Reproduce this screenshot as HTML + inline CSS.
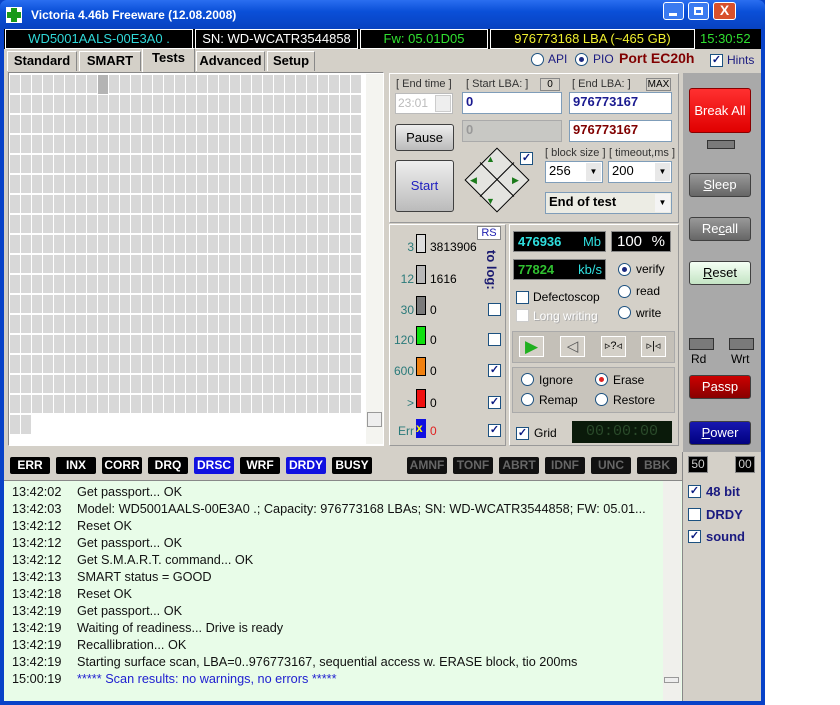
<!DOCTYPE html>
<html><head><meta charset="utf-8"><style>
*{box-sizing:border-box;margin:0;padding:0}
body{width:840px;height:705px;background:#fff;font-family:"Liberation Sans",sans-serif;font-size:12px;position:relative;overflow:hidden}
.a{position:absolute}
.win{left:0;top:0;width:765px;height:705px;background:#0842c8;}
.title{left:0;top:0;width:765px;height:29px;background:linear-gradient(#2a6ef0,#0a4fd8 40%,#0842c0);border-radius:7px 7px 0 0}
.body{left:4px;top:29px;width:757px;height:672px;background:#d4d0c8}
.inf{top:29px;height:20px;background:#000;border:1px solid #fff;font-size:13px;text-align:center;line-height:18px}
.tab{top:51px;height:20px;border:1px solid #fff;border-right-color:#888;border-bottom:none;font-weight:bold;font-size:13px;line-height:18px;text-align:center;background:#d4d0c8}
.btn{border:1px solid #404040;border-radius:3px;text-align:center;font-size:13px}
.inp{background:#fff;border:1px solid #7f9db9;font-weight:bold;font-size:13px;padding-left:3px;line-height:18px}
.lbl{font-size:11px;color:#333}
.cb{width:13px;height:13px;border:1px solid #1c5180;background:#fff;font-size:11px;line-height:11px;text-align:center;color:#0a1a80;font-weight:bold}
.rb{width:13px;height:13px;border:1px solid #1c5180;border-radius:50%;background:#fff}
.rb.on::after{content:"";position:absolute;left:3px;top:3px;width:5px;height:5px;border-radius:50%;background:#1c2a80}
.st{top:457px;height:17px;background:#000;color:#fff;font-weight:bold;font-size:12px;text-align:center;line-height:17px;border-radius:2px}
.st2{top:457px;height:17px;background:#111;color:#666;font-weight:bold;font-size:12px;text-align:center;line-height:17px;border-radius:2px}
.log div{height:17px;line-height:17px;white-space:nowrap}
.log span{display:inline-block;width:65px}
.bar{width:10px;height:19px;border:1px solid #000}
.num{font-size:12px;color:#2a7a7a;text-align:right;width:28px}
</style></head><body>
<div class="a win"></div>
<div class="a title"></div>
<div class="a" style="left:6px;top:7px;width:16px;height:16px;background:#fff"></div>
<div class="a" style="left:11px;top:8px;width:6px;height:14px;background:#1a9a1a"></div>
<div class="a" style="left:7px;top:12px;width:14px;height:6px;background:#1a9a1a"></div>
<div class="a" style="left:31px;top:8px;color:#fff;font-size:12px;font-weight:bold">Victoria 4.46b Freeware (12.08.2008)</div>
<div class="a" style="left:663px;top:2px;width:21px;height:18px;background:#3a7af0;border:1px solid #fff;border-radius:3px"><div class="a" style="left:5px;top:10px;width:8px;height:3px;background:#fff"></div></div>
<div class="a" style="left:688px;top:2px;width:21px;height:18px;background:#3a7af0;border:1px solid #fff;border-radius:3px"><div class="a" style="left:5px;top:4px;width:9px;height:8px;border:2px solid #fff;border-top-width:3px"></div></div>
<div class="a" style="left:713px;top:2px;width:23px;height:18px;background:#d8502c;border:1px solid #fff;border-radius:3px;color:#fff;font-weight:bold;text-align:center;line-height:15px;font-size:14px">X</div>
<div class="a body"></div>
<div class="a" style="left:4px;top:29px;width:757px;height:20px;background:#000"></div>
<div class="a inf" style="left:5px;width:188px;color:#30d8d8">WD5001AALS-00E3A0 .</div>
<div class="a inf" style="left:195px;width:163px;color:#fff">SN: WD-WCATR3544858</div>
<div class="a inf" style="left:360px;width:128px;color:#30e030">Fw: 05.01D05</div>
<div class="a inf" style="left:490px;width:205px;color:#f0f030">976773168 LBA (~465 GB)</div>
<div class="a" style="left:700px;top:31px;color:#30e030;font-size:13px">15:30:52</div>
<div class="a tab" style="left:7px;width:70px">Standard</div>
<div class="a tab" style="left:79px;width:62px">SMART</div>
<div class="a tab" style="left:142px;width:53px;top:48px;height:24px">Tests</div>
<div class="a tab" style="left:196px;width:69px">Advanced</div>
<div class="a tab" style="left:267px;width:48px">Setup</div>
<div class="a rb" style="left:531px;top:53px"></div><div class="a" style="left:548px;top:52px;color:#1a1a80;font-size:12px">API</div>
<div class="a rb on" style="left:575px;top:53px"></div><div class="a" style="left:593px;top:52px;color:#1a1a80;font-size:12px">PIO</div>
<div class="a" style="left:619px;top:50px;color:#800000;font-size:14px;font-weight:bold">Port EC20h</div>
<div class="a cb" style="left:710px;top:54px">✓</div><div class="a" style="left:727px;top:53px;color:#1a1a80;font-size:12px">Hints</div>
<!-- grid -->
<div class="a" style="left:8px;top:72px;width:376px;height:374px;background:#fff;border:1px solid #888;border-right-color:#fff;border-bottom-color:#fff"></div>
<div class="a" style="left:10px;top:75px;width:352px;height:340px;background-image:linear-gradient(90deg,transparent 10px,#fff 10px),linear-gradient(#d8d8d8 18px,#fff 18px);background-size:11px 20px,11px 20px"></div>
<div class="a" style="left:98px;top:75px;width:10px;height:19px;background:#b4b4b4"></div>
<div class="a" style="left:10px;top:415px;width:21px;height:19px;background-image:linear-gradient(90deg,#d8d8d8 10px,#fff 10px);background-size:11px 19px"></div>
<div class="a" style="left:366px;top:74px;width:17px;height:370px;background:#f4f4f0"></div>
<div class="a" style="left:367px;top:412px;width:15px;height:15px;background:#eee;border:1px solid #999"></div>
<!-- control panel -->
<div class="a" style="left:389px;top:73px;width:290px;height:150px;border:1px solid #fff;border-right-color:#999;border-bottom-color:#999"></div>
<div class="a lbl" style="left:396px;top:78px">[ End time ]</div>
<div class="a lbl" style="left:466px;top:78px">[ Start LBA: ]</div>
<div class="a" style="left:540px;top:78px;width:20px;height:13px;border:1px solid #888;font-size:10px;text-align:center;line-height:11px">0</div>
<div class="a lbl" style="left:572px;top:78px">[ End LBA: ]</div>
<div class="a" style="left:646px;top:78px;width:25px;height:13px;border:1px solid #888;font-size:10px;text-align:center;line-height:11px">MAX</div>
<div class="a" style="left:395px;top:93px;width:58px;height:21px;background:#fff;border:1px solid #bbb;color:#bbb;padding-left:2px;line-height:19px">23:01</div>
<div class="a" style="left:435px;top:95px;width:16px;height:17px;background:#eee;border:1px solid #ccc"></div>
<div class="a inp" style="left:462px;top:92px;width:100px;height:22px;color:#1a1a90">0</div>
<div class="a inp" style="left:569px;top:92px;width:103px;height:22px;color:#1a1a90">976773167</div>
<div class="a inp" style="left:462px;top:120px;width:100px;height:22px;background:#c8c8c4;border-color:#aaa;color:#999">0</div>
<div class="a inp" style="left:569px;top:120px;width:103px;height:22px;color:#800000">976773167</div>
<div class="a btn" style="left:395px;top:124px;width:59px;height:27px;background:linear-gradient(#eee,#bbb);line-height:25px">Pause</div>
<div class="a btn" style="left:395px;top:160px;width:59px;height:52px;background:linear-gradient(#eee,#bbb);line-height:50px;color:#2020c0">Start</div>
<div class="a" style="left:474px;top:157px;width:46px;height:46px;transform:rotate(45deg);border:1px solid #000;background:#e4e4e0"></div>
<div class="a" style="left:486px;top:154px;color:#1a7a1a;font-size:9px">▲</div>
<div class="a" style="left:486px;top:196px;color:#1a7a1a;font-size:9px">▼</div>
<div class="a" style="left:470px;top:175px;color:#1a7a1a;font-size:9px">◀</div>
<div class="a" style="left:512px;top:175px;color:#1a7a1a;font-size:9px">▶</div>
<div class="a" style="left:473px;top:179px;width:48px;height:1px;background:#000;transform:rotate(45deg)"></div>
<div class="a" style="left:473px;top:179px;width:48px;height:1px;background:#000;transform:rotate(-45deg)"></div>
<div class="a cb" style="left:520px;top:152px">✓</div>
<div class="a lbl" style="left:545px;top:147px">[ block size ]</div>
<div class="a lbl" style="left:609px;top:147px">[ timeout,ms ]</div>
<div class="a inp" style="left:545px;top:161px;width:58px;height:22px;font-weight:normal">256</div>
<div class="a" style="left:586px;top:163px;width:15px;height:18px;background:#e8e8e8;font-size:8px;text-align:center;line-height:18px">▼</div>
<div class="a inp" style="left:608px;top:161px;width:64px;height:22px;font-weight:normal">200</div>
<div class="a" style="left:655px;top:163px;width:15px;height:18px;background:#e8e8e8;font-size:8px;text-align:center;line-height:18px">▼</div>
<div class="a inp" style="left:545px;top:192px;width:127px;height:22px;background:#ecece4">End of test</div>
<div class="a" style="left:655px;top:194px;width:15px;height:18px;background:#f4f4f4;font-size:8px;text-align:center;line-height:18px">▼</div>
<!-- left stats -->
<div class="a" style="left:389px;top:224px;width:117px;height:222px;border:1px solid #fff;border-right-color:#999;border-bottom-color:#999"></div>
<div class="a" style="left:477px;top:226px;width:24px;height:14px;border:1px solid #888;background:#fff;color:#2020b0;font-size:11px;text-align:center;line-height:12px">RS</div>
<div class="a" style="left:484px;top:250px;color:#1a1a70;font-weight:bold;font-size:13px;writing-mode:vertical-rl">to log:</div>
<div class="a num" style="left:386px;top:240px">3</div><div class="a bar" style="left:416px;top:234px;background:#ddd"></div><div class="a" style="left:430px;top:240px">3813906</div>
<div class="a num" style="left:386px;top:272px">12</div><div class="a bar" style="left:416px;top:265px;background:#b8b8b8"></div><div class="a" style="left:430px;top:272px">1616</div>
<div class="a num" style="left:386px;top:303px">30</div><div class="a bar" style="left:416px;top:296px;background:#7a7a7a"></div><div class="a" style="left:430px;top:303px">0</div>
<div class="a num" style="left:386px;top:333px">120</div><div class="a bar" style="left:416px;top:326px;background:#10e010"></div><div class="a" style="left:430px;top:333px">0</div>
<div class="a num" style="left:386px;top:364px">600</div><div class="a bar" style="left:416px;top:357px;background:#f08010"></div><div class="a" style="left:430px;top:364px">0</div>
<div class="a num" style="left:386px;top:396px">&gt;</div><div class="a bar" style="left:416px;top:389px;background:#f01010"></div><div class="a" style="left:430px;top:396px">0</div>
<div class="a num" style="left:386px;top:424px">Err</div><div class="a" style="left:416px;top:419px;width:10px;height:19px;background:#1010e0;color:#ff0;font-weight:bold;font-size:12px;line-height:19px">x</div><div class="a" style="left:430px;top:424px;color:#e02020">0</div>
<div class="a cb" style="left:488px;top:303px"></div>
<div class="a cb" style="left:488px;top:333px"></div>
<div class="a cb" style="left:488px;top:364px">✓</div>
<div class="a cb" style="left:488px;top:396px">✓</div>
<div class="a cb" style="left:488px;top:424px">✓</div>
<!-- right stats -->
<div class="a" style="left:509px;top:224px;width:170px;height:222px;border:1px solid #fff;border-right-color:#999;border-bottom-color:#999"></div>
<div class="a" style="left:513px;top:231px;width:93px;height:21px;background:#000;border:1px solid #888;color:#30e0e0;font-weight:bold;font-size:13px;line-height:19px;padding-left:4px">476936<span style="position:absolute;right:4px;font-weight:normal">Mb</span></div>
<div class="a" style="left:611px;top:231px;width:60px;height:21px;background:#000;border:1px solid #888;color:#fff;font-size:15px;line-height:19px;padding-left:5px">100 <span style="position:absolute;right:5px">%</span></div>
<div class="a" style="left:513px;top:259px;width:93px;height:21px;background:#000;border:1px solid #888;color:#30c030;font-weight:bold;font-size:13px;line-height:19px;padding-left:4px">77824<span style="position:absolute;right:3px;font-weight:normal;color:#30e0e0">kb/s</span></div>
<div class="a rb on" style="left:618px;top:263px"></div><div class="a" style="left:636px;top:262px;font-size:12px">verify</div>
<div class="a rb" style="left:618px;top:285px"></div><div class="a" style="left:636px;top:284px;font-size:12px">read</div>
<div class="a rb" style="left:618px;top:306px"></div><div class="a" style="left:636px;top:306px;font-size:12px">write</div>
<div class="a cb" style="left:516px;top:291px"></div><div class="a" style="left:533px;top:290px;font-size:12px">Defectoscop</div>
<div class="a cb" style="left:516px;top:309px;border-color:#ccc"></div><div class="a" style="left:533px;top:309px;font-size:12px;color:#fff;text-shadow:1px 1px #aaa">Long writing</div>
<div class="a" style="left:512px;top:331px;width:163px;height:32px;background:#c4c0b8;border:1px solid #aaa"></div>
<div class="a" style="left:519px;top:336px;width:25px;height:21px;border:1px solid #fff;background:#d4d0c8;color:#20b020;font-size:17px;line-height:19px;text-align:center">▶</div>
<div class="a" style="left:560px;top:336px;width:25px;height:21px;border:1px solid #fff;background:#d4d0c8;color:#555;font-size:15px;line-height:19px;text-align:center">◁</div>
<div class="a" style="left:601px;top:336px;width:25px;height:21px;border:1px solid #fff;background:#d4d0c8;font-size:11px;line-height:19px;text-align:center">▹?◃</div>
<div class="a" style="left:641px;top:336px;width:25px;height:21px;border:1px solid #fff;background:#d4d0c8;font-size:11px;line-height:19px;text-align:center">▹|◃</div>
<div class="a" style="left:512px;top:367px;width:163px;height:46px;background:#c8c4bc;border:1px solid #aaa"></div>
<div class="a rb" style="left:521px;top:373px"></div><div class="a" style="left:539px;top:373px">Ignore</div>
<div class="a rb" style="left:595px;top:373px"></div><div class="a" style="left:599px;top:377px;width:5px;height:5px;border-radius:50%;background:#e02020"></div><div class="a" style="left:613px;top:373px">Erase</div>
<div class="a rb" style="left:521px;top:393px"></div><div class="a" style="left:539px;top:393px">Remap</div>
<div class="a rb" style="left:595px;top:393px"></div><div class="a" style="left:613px;top:393px">Restore</div>
<div class="a cb" style="left:516px;top:427px">✓</div><div class="a" style="left:534px;top:426px">Grid</div>
<div class="a" style="left:572px;top:421px;width:100px;height:22px;background:#0a1a0a;color:#2a4a2a;font-family:'Liberation Mono',monospace;font-size:15px;line-height:22px;text-align:center">00:00:00</div>
<!-- right column -->
<div class="a" style="left:683px;top:73px;width:78px;height:384px;background:#a9a9a9"></div>
<div class="a" style="left:682px;top:452px;width:79px;height:249px;background:#d4d0c8;border-left:1px solid #888"></div>
<div class="a btn" style="left:689px;top:88px;width:62px;height:45px;background:linear-gradient(#ff3030,#e00000);color:#fff;line-height:43px;border-color:#800">Break All</div>
<div class="a" style="left:707px;top:140px;width:28px;height:9px;background:#7a7a7a;border:1px solid #333"></div>
<div class="a btn" style="left:689px;top:173px;width:62px;height:24px;background:linear-gradient(#999,#666);color:#fff;line-height:22px"><u>S</u>leep</div>
<div class="a btn" style="left:689px;top:217px;width:62px;height:24px;background:linear-gradient(#999,#666);color:#fff;line-height:22px">Re<u>c</u>all</div>
<div class="a btn" style="left:689px;top:261px;width:62px;height:24px;background:linear-gradient(#f4fff4,#c4e4c4);line-height:22px"><u>R</u>eset</div>
<div class="a" style="left:689px;top:338px;width:25px;height:12px;background:#7a7a7a;border:1px solid #333"></div>
<div class="a" style="left:729px;top:338px;width:25px;height:12px;background:#7a7a7a;border:1px solid #333"></div>
<div class="a" style="left:691px;top:352px">Rd</div><div class="a" style="left:731px;top:352px">Wrt</div>
<div class="a btn" style="left:689px;top:375px;width:62px;height:24px;background:linear-gradient(#c00,#800);color:#fff;line-height:22px">Passp</div>
<div class="a btn" style="left:689px;top:421px;width:62px;height:24px;background:linear-gradient(#1818b0,#000080);color:#fff;line-height:22px"><u>P</u>ower</div>
<div class="a" style="left:688px;top:456px;width:20px;height:17px;background:#000;color:#ccc;border:1px solid #888;font-size:12px;line-height:15px;text-align:center">50</div>
<div class="a" style="left:735px;top:456px;width:20px;height:17px;background:#000;color:#ccc;border:1px solid #888;font-size:12px;line-height:15px;text-align:center">00</div>
<!-- status -->
<div class="a st" style="left:10px;width:40px">ERR</div>
<div class="a st" style="left:56px;width:40px">INX</div>
<div class="a st" style="left:102px;width:40px">CORR</div>
<div class="a st" style="left:148px;width:40px">DRQ</div>
<div class="a st" style="left:194px;width:40px;background:#1010e0">DRSC</div>
<div class="a st" style="left:240px;width:40px">WRF</div>
<div class="a st" style="left:286px;width:40px;background:#1010e0">DRDY</div>
<div class="a st" style="left:332px;width:40px">BUSY</div>
<div class="a st2" style="left:407px;width:40px">AMNF</div>
<div class="a st2" style="left:453px;width:40px">TONF</div>
<div class="a st2" style="left:499px;width:40px">ABRT</div>
<div class="a st2" style="left:545px;width:40px">IDNF</div>
<div class="a st2" style="left:591px;width:40px">UNC</div>
<div class="a st2" style="left:637px;width:40px">BBK</div>
<!-- log -->
<div class="a" style="left:4px;top:480px;width:678px;height:221px;background:#e8fce8;border-top:1px solid #888"></div>
<div class="a" style="left:663px;top:481px;width:18px;height:220px;background:#f0f0ec"></div>
<div class="a" style="left:664px;top:677px;width:15px;height:6px;border:1px solid #999;background:#eee"></div>
<div class="a log" style="left:12px;top:484px;font-size:12.7px;color:#111">
<div><span>13:42:02</span>Get passport... OK</div>
<div><span>13:42:03</span>Model: WD5001AALS-00E3A0 .; Capacity: 976773168 LBAs; SN: WD-WCATR3544858; FW: 05.01...</div>
<div><span>13:42:12</span>Reset OK</div>
<div><span>13:42:12</span>Get passport... OK</div>
<div><span>13:42:12</span>Get S.M.A.R.T. command... OK</div>
<div><span>13:42:13</span>SMART status = GOOD</div>
<div><span>13:42:18</span>Reset OK</div>
<div><span>13:42:19</span>Get passport... OK</div>
<div><span>13:42:19</span>Waiting of readiness... Drive is ready</div>
<div><span>13:42:19</span>Recallibration... OK</div>
<div><span>13:42:19</span>Starting surface scan, LBA=0..976773167, sequential access w. ERASE block, tio 200ms</div>
<div><span>15:00:19</span><b style="font-weight:normal;color:#2020d0">***** Scan results: no warnings, no errors *****</b></div>
</div>
<div class="a cb" style="left:688px;top:485px">✓</div><div class="a" style="left:706px;top:484px;color:#1a1a80;font-weight:bold;font-size:13px">48 bit</div>
<div class="a cb" style="left:688px;top:508px"></div><div class="a" style="left:706px;top:507px;color:#1a1a80;font-weight:bold;font-size:13px">DRDY</div>
<div class="a cb" style="left:688px;top:530px">✓</div><div class="a" style="left:706px;top:529px;color:#1a1a80;font-weight:bold;font-size:13px">sound</div>
</body></html>
